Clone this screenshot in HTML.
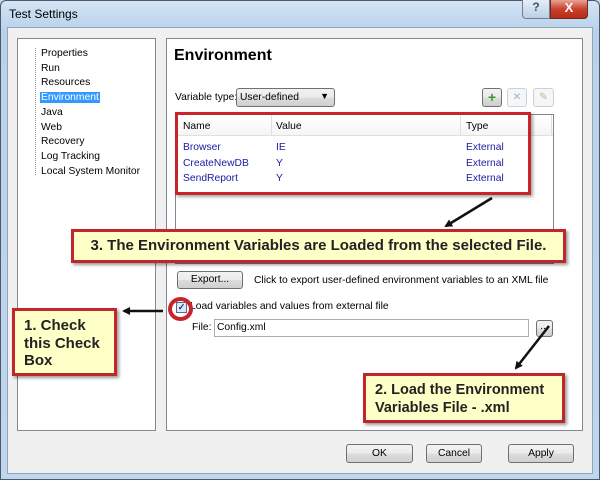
<!DOCTYPE html>
<html><head><style>
*{margin:0;padding:0;box-sizing:border-box}
body{width:600px;height:480px;position:relative;overflow:hidden;background:#c5d9ec;font-family:"Liberation Sans",sans-serif;font-size:10.3px;color:#000}
.a{position:absolute}
.frame{left:0;top:0;width:600px;height:480px;border:1px solid #4a5a6a;border-radius:6px 6px 0 0;background:linear-gradient(#d4e4f4,#b9d1ea 30px,#c0d6ec)}
.inner{left:7px;top:27px;width:586px;height:447px;background:#f0f0f0;border:1px solid #8ea5bd}
.panel{background:#fff;border:1px solid #828790}
.t{position:absolute;white-space:nowrap}
.btn{position:absolute;border:1px solid #707070;border-radius:3px;background:linear-gradient(#f2f2f2,#ebebeb 50%,#dddddd 51%,#cfcfcf);text-align:center}
.call{position:absolute;background:#ffffc8;border:3px solid #c0272d;box-shadow:2px 2px 3px rgba(0,0,0,.4);font-weight:bold;font-size:15px;color:#222}
.blue{color:#1a1aa0}
</style></head><body>
<div class="a frame"></div>
<div class="t" style="left:9px;top:7px;font-size:12px">Test Settings</div>
<div class="a" style="left:522px;top:0;width:28px;height:19px;border:1px solid #6d7f93;border-top:none;border-radius:0 0 0 4px;background:linear-gradient(#e5eef8,#bcd0e6);text-align:center;font-size:12px;color:#44556a;font-weight:bold">?</div>
<div class="a" style="left:550px;top:0;width:38px;height:19px;border:1px solid #6b2b22;border-top:none;border-radius:0 0 4px 0;background:linear-gradient(#e8a493,#c8412b 50%,#b82c16);text-align:center;font-size:13px;color:#fff;font-weight:bold">X</div>
<div class="a inner"></div>
<div class="a panel" style="left:17px;top:38px;width:139px;height:393px"></div>
<div class="a panel" style="left:166px;top:38px;width:417px;height:393px"></div>
<div class="a" style="left:35px;top:48px;height:127px;border-left:1px dotted #999"></div>
<div class="t" style="left:41px;top:47px;line-height:14.7px">
<div>Properties</div><div>Run</div><div>Resources</div><div><span style="background:#3399ff;color:#fff;padding:0 1px;margin-left:-1px">Environment</span></div><div>Java</div><div>Web</div><div>Recovery</div><div>Log Tracking</div><div>Local System Monitor</div></div>
<div class="t" style="left:174px;top:47px;font-size:16px;font-weight:bold">Environment</div>
<div class="t" style="left:175px;top:92px">Variable type:</div>
<div class="btn" style="left:236px;top:88px;width:99px;height:19px;text-align:left;padding:3px 3px">User-defined<span style="position:absolute;right:5px;top:2px;font-size:9px">▼</span></div>
<div class="btn" style="left:482px;top:88px;width:20px;height:19px;color:#3a9a2a;font-weight:bold;font-size:14px;line-height:16px">+</div>
<div class="a" style="left:507px;top:88px;width:20px;height:19px;border:1px solid #c8d2dc;border-radius:3px;background:#f4f6f8;color:#a8b4c0;text-align:center;line-height:17px">✕</div>
<div class="a" style="left:533px;top:88px;width:21px;height:19px;border:1px solid #c8d2dc;border-radius:3px;background:#f4f6f8;color:#c8b880;text-align:center;line-height:17px">✎</div>
<div class="a" style="left:175px;top:114px;width:379px;height:150px;border:1px solid #828790;background:#fff"></div>
<div class="a" style="left:176px;top:115px;width:377px;height:21px;border-bottom:1px solid #e0e0e0;background:linear-gradient(#fff,#f5f5f5)"></div>
<div class="a" style="left:271px;top:115px;height:21px;border-left:1px solid #e0e0e0"></div>
<div class="a" style="left:460px;top:115px;height:21px;border-left:1px solid #e0e0e0"></div>
<div class="a" style="left:551px;top:115px;height:21px;border-left:1px solid #e0e0e0"></div>
<div class="t" style="left:183px;top:121px">Name</div>
<div class="t" style="left:276px;top:121px">Value</div>
<div class="t" style="left:466px;top:121px">Type</div>
<div class="t blue" style="left:183px;top:140px;line-height:15.5px"><div>Browser</div><div>CreateNewDB</div><div>SendReport</div></div>
<div class="t blue" style="left:276px;top:140px;line-height:15.5px"><div>IE</div><div>Y</div><div>Y</div></div>
<div class="t blue" style="left:466px;top:140px;line-height:15.5px"><div>External</div><div>External</div><div>External</div></div>
<div class="a" style="left:175px;top:112px;width:356px;height:83px;border:3px solid #c8252b;box-shadow:2px 2px 3px rgba(0,0,0,.35)"></div>
<div class="btn" style="left:177px;top:271px;width:66px;height:18px;line-height:16px">Export...</div>
<div class="t" style="left:254px;top:275px">Click to export user-defined environment variables to an XML file</div>
<div class="a" style="left:176px;top:302px;width:11px;height:11px;border:1px solid #5a6a8a;background:#dfe8f6;font-size:9px;line-height:9px;text-align:center;color:#1c2f6a;font-weight:bold">✓</div>
<div class="t" style="left:190px;top:301px">Load variables and values from external file</div>
<div class="t" style="left:192px;top:322px">File:</div>
<div class="a" style="left:214px;top:319px;width:315px;height:18px;border:1px solid #abadb3;background:#fff"></div>
<div class="t" style="left:217px;top:322px">Config.xml</div>
<div class="btn" style="left:536px;top:320px;width:17px;height:17px;line-height:12px">...</div>
<div class="a" style="left:168px;top:297px;width:25px;height:24px;border:4px solid #c8252b;border-radius:50%"></div>
<div class="call" style="left:71px;top:229px;width:495px;height:34px;text-align:center;line-height:28px">3. The Environment Variables are Loaded from the selected File.</div>
<div class="call" style="left:12px;top:308px;width:105px;height:68px;padding:6px 0 0 9px;line-height:17.5px">1. Check<br>this Check<br>Box</div>
<div class="call" style="left:363px;top:373px;width:202px;height:50px;padding:6px 0 0 9px;line-height:17.5px;font-size:14.5px">2. Load the Environment<br>Variables File - .xml</div>
<svg class="a" style="left:0;top:0" width="600" height="480">
<defs><marker id="m" markerWidth="8" markerHeight="8" refX="6" refY="4" orient="auto" markerUnits="userSpaceOnUse"><path d="M0,0 L8,4 L0,8 z" fill="#111"/></marker></defs>
<line x1="492" y1="198" x2="446" y2="226" stroke="#111" stroke-width="2.5" marker-end="url(#m)"/>
<line x1="163" y1="311" x2="124" y2="311" stroke="#111" stroke-width="2.5" marker-end="url(#m)"/>
<line x1="549" y1="326" x2="516" y2="368" stroke="#111" stroke-width="2.5" marker-end="url(#m)"/>
</svg>
<div class="btn" style="left:346px;top:444px;width:67px;height:19px;line-height:17px">OK</div>
<div class="btn" style="left:426px;top:444px;width:56px;height:19px;line-height:17px">Cancel</div>
<div class="btn" style="left:508px;top:444px;width:66px;height:19px;line-height:17px">Apply</div>
</body></html>
